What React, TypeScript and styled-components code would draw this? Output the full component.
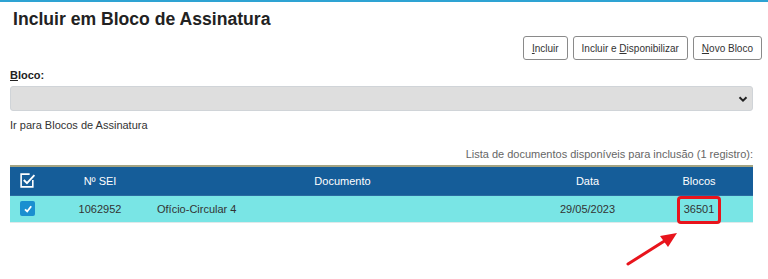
import React from "react";
import styled, { createGlobalStyle } from "styled-components";

const Global = createGlobalStyle`
  html, body { margin: 0; padding: 0; background: #fff; }
  body { font-family: Arial, "Liberation Sans", sans-serif; color: #333; }
`;

const Page = styled.div`
  border-top: 2px solid #2ea3d3;
  position: relative;
  height: 277px;
`;

const Title = styled.h1`
  margin: 0;
  padding: 7px 0 0 13px;
  font-size: 17.6px;
  font-weight: bold;
  color: #222;
  height: 27px;
  box-sizing: border-box;
`;

const Toolbar = styled.div`
  display: flex;
  justify-content: flex-end;
  gap: 5px;
  padding: 7px 6px 0 0;
`;

const Button = styled.button`
  height: 24px;
  padding: 0 8px;
  font-family: Arial, "Liberation Sans", sans-serif;
  font-size: 10px;
  color: #333;
  background: #fff;
  border: 1px solid #8a8a8a;
  border-radius: 3px;
  & u { text-decoration: underline; }
`;

const Form = styled.div`
  padding: 7px 15px 0 10px;
`;

const Label = styled.div`
  font-size: 11px;
  font-weight: bold;
  color: #222;
  height: 17px;
  padding-top: 2px;
`;

const Select = styled.div`
  height: 25px;
  box-sizing: border-box;
  background: #dedede;
  border: 1px solid #d0d4d8;
  border-radius: 3px;
  display: flex;
  align-items: center;
  justify-content: flex-end;
  padding-right: 4px;
`;

const LinkText = styled.div`
  font-size: 11px;
  color: #333;
  margin-top: 8px;
`;

const Caption = styled.div`
  font-size: 11px;
  color: #666;
  text-align: right;
  margin-top: 17px;
`;

const Table = styled.table`
  margin-top: 5px;
  width: 100%;
  border-collapse: collapse;
  border-top: 2px solid #a4a482;
  font-size: 11px;
`;

const HeadRow = styled.tr`
  background: #155d99;
  color: #fff;
  height: 29px;
`;

const Th = styled.th<{ $w?: number }>`
  font-weight: normal;
  text-align: center;
  padding: 0;
  width: ${(p) => (p.$w ? `${p.$w}px` : "auto")};
  border-bottom: 1px solid #2a6aa0;
`;

const Row = styled.tr`
  background: #79e5e5;
  height: 27px;
  border-bottom: 1px solid #dfe9ea;
`;

const Td = styled.td<{ $align?: string }>`
  padding: 0;
  text-align: ${(p) => p.$align || "center"};
  color: #333;
  position: relative;
`;

const DocCell = styled(Td)`
  padding-left: 2px;
`;

const Highlight = styled.span`
  position: absolute;
  left: 32px;
  top: 0px;
  width: 44px;
  height: 28px;
  box-sizing: border-box;
  border: 3px solid #e8141c;
  border-radius: 4px;
`;

const Check = styled.span`
  display: inline-flex;
  width: 15px;
  height: 15px;
  background: #1a8fd0;
  border-radius: 2px;
  align-items: center;
  justify-content: center;
  vertical-align: middle;
`;

const Arrow = styled.svg`
  position: absolute;
  left: 620px;
  top: 222px;
`;

export default function App() {
  return (
    <>
      <Global />
      <Page>
        <Title>Incluir em Bloco de Assinatura</Title>
        <Toolbar>
          <Button><u>I</u>ncluir</Button>
          <Button>Incluir e <u>D</u>isponibilizar</Button>
          <Button><u>N</u>ovo Bloco</Button>
        </Toolbar>
        <Form>
          <Label><u>B</u>loco:</Label>
          <Select>
            <svg width="10" height="8" viewBox="0 0 10 8">
              <path d="M1.5 2.2 L5 5.6 L8.5 2.2" stroke="#222" strokeWidth="2" fill="none" />
            </svg>
          </Select>
          <LinkText>Ir para Blocos de Assinatura</LinkText>
          <Caption>Lista de documentos disponíveis para inclusão (1 registro):</Caption>
          <Table>
            <thead>
              <HeadRow>
                <Th $w={35}>
                  <svg width="17" height="17" viewBox="0 0 16 16" style={{ verticalAlign: "middle" }}>
                    <path d="M13 7.5 V14 H2 V2 H10" stroke="#fff" strokeWidth="1.5" fill="none" />
                    <path d="M4.5 7.5 L7.5 10.5 L14.5 3" stroke="#fff" strokeWidth="1.8" fill="none" />
                  </svg>
                </Th>
                <Th $w={110}>Nº SEI</Th>
                <Th $w={375}>Documento</Th>
                <Th $w={115}>Data</Th>
                <Th>Blocos</Th>
              </HeadRow>
            </thead>
            <tbody>
              <Row>
                <Td>
                  <Check>
                    <svg width="10" height="10" viewBox="0 0 10 10">
                      <path d="M2 5.3 L4.2 7.5 L8.2 2.2" stroke="#fff" strokeWidth="1.8" fill="none" />
                    </svg>
                  </Check>
                </Td>
                <Td>1062952</Td>
                <DocCell $align="left">Ofício-Circular 4</DocCell>
                <Td>29/05/2023</Td>
                <Td>
                  <Highlight />
                  36501
                </Td>
              </Row>
            </tbody>
          </Table>
        </Form>
        <Arrow width="70" height="50" viewBox="0 0 70 50">
          <path d="M8 40 L46 16" stroke="#e8141c" strokeWidth="3" fill="none" strokeLinecap="round" />
          <path d="M57 9 L40 12 L48 23 Z" fill="#e8141c" />
        </Arrow>
      </Page>
    </>
  );
}
